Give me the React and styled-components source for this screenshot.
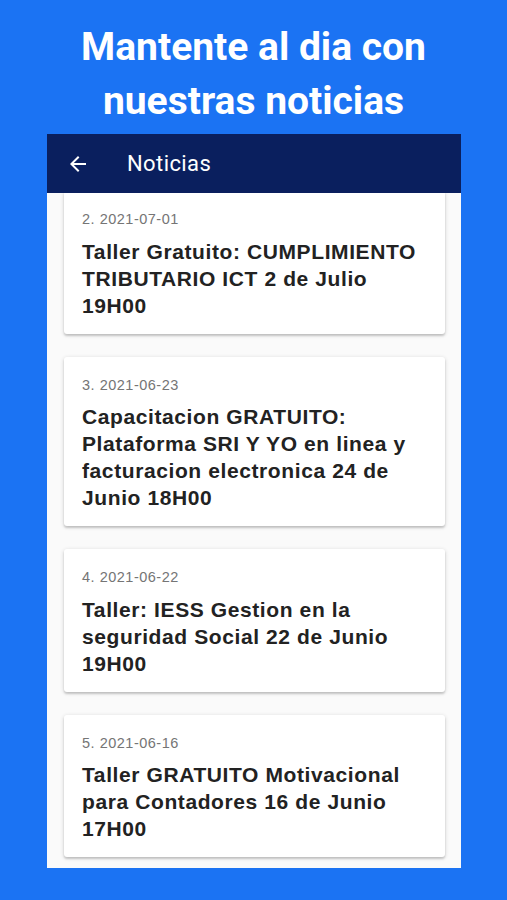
import React from 'react';
import styled, { createGlobalStyle } from 'styled-components';

const news = [
  { n: 2, date: '2021-07-01', title: 'Taller Gratuito: CUMPLIMIENTO TRIBUTARIO ICT 2 de Julio 19H00' },
  { n: 3, date: '2021-06-23', title: 'Capacitacion GRATUITO: Plataforma SRI Y YO en linea y facturacion electronica 24 de Junio 18H00' },
  { n: 4, date: '2021-06-22', title: 'Taller: IESS Gestion en la seguridad Social 22 de Junio 19H00' },
  { n: 5, date: '2021-06-16', title: 'Taller GRATUITO Motivacional para Contadores 16 de Junio 17H00' },
];

const App = () => {
  return (
    <>
      <GlobalStyle />
      <Screen>
        <Headline>Mantente al dia con nuestras noticias</Headline>
        <Phone>
          <AppBar>
            <BackIcon viewBox="0 0 24 24">
              <path d="M20 11H7.83l5.59-5.59L12 4l-8 8 8 8 1.41-1.41L7.83 13H20v-2z" />
            </BackIcon>
            <BarTitle>Noticias</BarTitle>
          </AppBar>
          <List>
            {news.map((item) => (
              <Card key={item.n}>
                <DateLine>{item.n}. {item.date}</DateLine>
                <CardTitle>{item.title}</CardTitle>
              </Card>
            ))}
          </List>
        </Phone>
      </Screen>
    </>
  );
};

export default App;

const GlobalStyle = createGlobalStyle`
  html, body {
    margin: 0;
    padding: 0;
    background: #1b73f3;
  }
`;

const Screen = styled.div`
  width: 507px;
  height: 900px;
  background: #1b73f3;
  display: flex;
  flex-direction: column;
  align-items: center;
  overflow: hidden;
`;

const Headline = styled.h1`
  margin: 20px 0 6px;
  width: 400px;
  text-align: center;
  font-family: Roboto, "Noto Sans", sans-serif;
  font-weight: 700;
  font-size: 39px;
  line-height: 54px;
  color: #ffffff;
`;

const Phone = styled.div`
  width: 414px;
  height: 734px;
  margin-left: 1px;
  background: #fafafa;
  display: flex;
  flex-direction: column;
  overflow: hidden;
`;

const AppBar = styled.div`
  position: relative;
  z-index: 1;
  height: 59px;
  flex-shrink: 0;
  background: #0a1f5e;
  display: flex;
  align-items: center;
  padding-left: 19px;
  gap: 37px;
`;

const BackIcon = styled.svg`
  width: 24px;
  height: 24px;
  fill: #ffffff;
`;

const BarTitle = styled.span`
  font-family: Roboto, "Noto Sans", sans-serif;
  font-weight: 400;
  font-size: 22px;
  letter-spacing: 0.4px;
  color: #ffffff;
`;

const List = styled.div`
  display: flex;
  flex-direction: column;
  gap: 23px;
  padding: 0 16px 12px 17px;
  margin-top: -2px;
`;

const Card = styled.div`
  background: #ffffff;
  border-radius: 3px;
  padding: 19px 18px 15px;
  box-shadow: 0 2px 2px rgba(0, 0, 0, 0.14), 0 1px 4px rgba(0, 0, 0, 0.16);
`;

const DateLine = styled.div`
  font-family: "Liberation Sans", Arial, sans-serif;
  font-size: 14.5px;
  letter-spacing: 0.5px;
  line-height: 18px;
  color: #757575;
`;

const CardTitle = styled.div`
  margin-top: 9.5px;
  font-family: "Liberation Sans", Arial, sans-serif;
  font-weight: 700;
  font-size: 21px;
  letter-spacing: 0.6px;
  line-height: 27px;
  color: #222222;
`;
